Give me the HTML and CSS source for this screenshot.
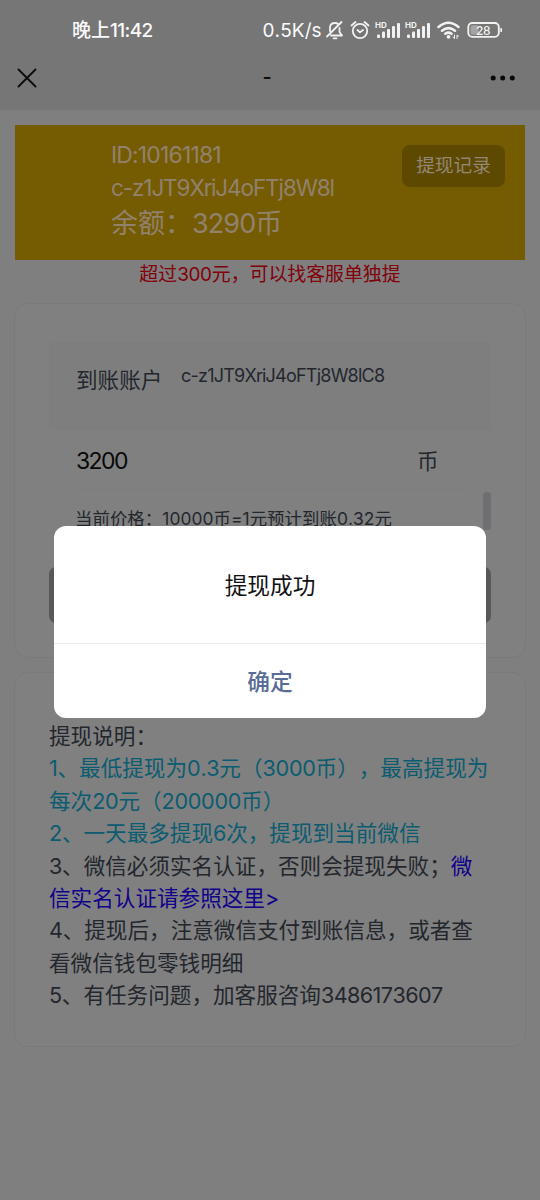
FILE: index.html
```
<!DOCTYPE html>
<html lang="zh-CN">
<head>
<meta charset="utf-8">
<title>提现</title>
<link rel="stylesheet" href="styles.css">
</head>
<body>
<div class="screen">
  <header class="header">
    <div class="status">
      <span class="time">晚上<span class="clock">11:42</span></span>
      <span class="speed">0.5K/s</span>
      <svg class="sysicons" width="178" height="24" viewBox="324 18 178 24" fill="none" stroke="#f2f2f2" stroke-width="1.8" stroke-linecap="round" stroke-linejoin="round">
        <path d="M327 36.500L341.500 22M330 31V28Q330 23 335 23Q337 23 338 24M339.500 28V32L342 35.500H331M333.500 38.300H336.500"/>
        <circle cx="360" cy="31" r="7.200"/><path d="M357.500 30L360 32.300L363 30M351.500 25.500L355.500 22M364.500 22L368.500 25.500"/>
        <g stroke="none" fill="#f2f2f2">
          <text class="hd" x="375" y="27.500">HD</text>
          <rect x="377" y="34.500" width="3" height="3.500" rx="1"/><rect x="382" y="31.500" width="3" height="6.500" rx="1"/><rect x="387" y="29" width="3" height="9" rx="1"/><rect x="392" y="26" width="3" height="12" rx="1"/><rect x="397" y="23" width="3" height="15" rx="1"/>
          <text class="hd" x="405" y="27.500">HD</text>
          <rect x="407" y="34.500" width="3" height="3.500" rx="1"/><rect x="412" y="31.500" width="3" height="6.500" rx="1"/><rect x="417" y="29" width="3" height="9" rx="1"/><rect x="422" y="26" width="3" height="12" rx="1"/><rect x="427" y="23" width="3" height="15" rx="1"/>
          <circle cx="448.500" cy="36.800" r="1.900"/>
        </g>
        <path stroke-width="2.500" d="M438.500 27Q448.500 18.500 458.500 27M442 30.800Q448.500 25.500 455 30.800M445.300 33.700Q448.500 31.500 451.500 33.700"/>
        <path stroke-width="1" d="M454.500 35V38.500L453 37.200M457 38.500V35L458.500 36.200"/>
        <rect x="468.300" y="23" width="30.500" height="13.800" rx="4"/>
        <rect x="470.500" y="25.200" width="8" height="9.500" rx="2" fill="#a4a4a4" stroke="none"/>
        <path d="M501.200 28.800V31.200"/>
        <text class="battery" x="476" y="34.500" fill="#f2f2f2" stroke="none">28</text>
      </svg>
    </div>
    <nav class="nav">
      <svg width="20" height="20" viewBox="0 0 20 20" stroke="#0e0e0e" stroke-width="1.900" stroke-linecap="round"><path d="M1.500 1.500L18.500 18.500M18.500 1.500L1.500 18.500"/></svg>
      <span class="title">-</span>
      <svg width="26" height="6" viewBox="0 0 26 6" fill="#080808"><circle cx="3.200" cy="3" r="2.500"/><circle cx="12.700" cy="3" r="2.500"/><circle cx="22.300" cy="3" r="2.500"/></svg>
    </nav>
  </header>
  <main>
    <section class="profile">
      <div class="who">
        <div class="line id">ID:10161181</div>
        <div class="line name">c-z1JT9XriJ4oFTj8W8l</div>
        <div class="balance">余额：<span class="amount">3290</span>币</div>
      </div>
      <div class="record">提现记录</div>
    </section>
    <p class="notice">超过<span class="n">300</span>元，可以找客服单独提</p>
    <section class="card form">
      <div class="account"><span class="label">到账账户</span><span class="acct">c-z1JT9XriJ4oFTj8W8lC8</span></div>
      <div class="coins"><span class="value">3200</span><span class="unit">币</span></div>
      <div class="price"><span>当前价格：10000币=1元预计到账0.32元</span><i class="thumb"></i></div>
      <div class="submit"></div>
    </section>
    <section class="card help">
      <p>提现说明：</p>
      <p class="teal"><span class="n">1</span>、最低提现为<span class="n">0.3</span>元（<span class="n">3000</span>币），最高提现为</p>
      <p class="teal">每次<span class="n">20</span>元（<span class="n">200000</span>币）</p>
      <p class="teal"><span class="n">2</span>、一天最多提现<span class="n">6</span>次，提现到当前微信</p>
      <p><span class="n">3</span>、微信必须实名认证，否则会提现失败；<a>微</a></p>
      <p><a>信实名认证请参照这里&gt;</a></p>
      <p><span class="n">4</span>、提现后，注意微信支付到账信息，或者查</p>
      <p>看微信钱包零钱明细</p>
      <p><span class="n">5</span>、有任务问题，加客服咨询<span class="qq">3486173607</span></p>
    </section>
  </main>
  <div class="overlay">
    <div class="dialog"><div class="message">提现成功</div><div class="confirm">确定</div></div>
  </div>
</div>
</body>
</html>
```
FILE: styles.css
```
* { box-sizing: border-box; }
body { margin: 0; font-family: Inter, "Noto Sans CJK SC", sans-serif; background: #7f7f7f; font-feature-settings: "calt" 0; font-kerning: none; text-spacing-trim: space-all; }
p { margin: 0; }
.screen { position: relative; width: 540px; height: 1200px; overflow: hidden; background: #7f7f7f; color: #23272d; white-space: nowrap; }
.header { height: 110px; background: #767676; }
.status { display: flex; align-items: center; height: 60px; padding-left: 72px; color: #fafafa; font-size: 19px; font-weight: 500; }
.time { width: 190.500px; line-height: 24px; padding-top: 2px; }
.clock { letter-spacing: -0.600px; }
.speed { width: 61.500px; font-weight: 400; letter-spacing: 0.100px; }
.hd { font-size: 8px; font-weight: 700; }
.battery { font-size: 12px; font-weight: 500; letter-spacing: -0.300px; }
.nav { display: flex; align-items: center; justify-content: space-between; height: 35px; padding: 0 24px 0 17px; color: #080808; font-size: 20px; }
.title { font-weight: 500; padding: 0 0 2px 7px; }
main { padding: 15px 14px 0; }
.profile { display: flex; justify-content: space-between; height: 135px; margin: 0 1px; padding: 14px 20px 0 96px; background: #765c00; color: #91816f; }
.line { height: 33px; line-height: 33px; font-size: 23px; }
.id { letter-spacing: -0.850px; }
.name { font-size: 22.500px; line-height: 31px; letter-spacing: -1.100px; }
.balance { line-height: 38px; font-size: 27px; }
.amount { letter-spacing: -0.900px; }
.record { width: 103px; height: 42px; margin-top: 6px; border-radius: 8px; background: #5e4900; color: #938775; font-size: 18.700px; line-height: 41px; text-align: center; }
.notice { height: 28px; line-height: 30px; margin-bottom: 15px; text-align: center; font-size: 18.900px; color: #82000a; }
.n { letter-spacing: -0.300px; }
.qq { letter-spacing: -0.600px; }
.card { border: 1px solid #7a7a7b; border-radius: 14px; background: #808080; padding: 0 34px; }
.form { height: 355px; padding-top: 38px; }
.account { display: flex; height: 88px; padding: 0 27px; background: #7e7e7f; line-height: 76px; }
.label { width: 105px; font-size: 21.600px; }
.acct { font-size: 18px; line-height: 67px; letter-spacing: -0.770px; }
.coins { display: flex; height: 60px; margin: 0 27px; border-bottom: 1px solid #7d7d7d; line-height: 61px; }
.value { width: 341px; font-size: 23px; line-height: 63px; letter-spacing: -1.600px; color: #080808; }
.unit { font-size: 21.600px; line-height: 63px; }
.price { display: flex; justify-content: space-between; height: 77px; padding-left: 26px; font-size: 17.400px; line-height: 57px; letter-spacing: 0.060px; }
.thumb { width: 8px; height: 38px; margin-top: 2px; border-radius: 3px; background: #6f6f71; }
.submit { height: 56px; border-radius: 7px; background: #585858; }
.help { height: 375px; margin-top: 14px; padding-top: 47px; font-size: 21.600px; line-height: 32.400px; }
.teal { color: #0b5c70; }
.help a { color: #10008b; }
.overlay { position: absolute; inset: 0; padding: 526px 54px 0; }
.dialog { height: 192px; border-radius: 12px; background: #fff; text-align: center; font-size: 22.700px; }
.message { height: 118px; line-height: 119px; border-bottom: 1px solid #ebebeb; color: #121212; }
.confirm { line-height: 75px; color: #576b95; font-weight: 500; }
```
